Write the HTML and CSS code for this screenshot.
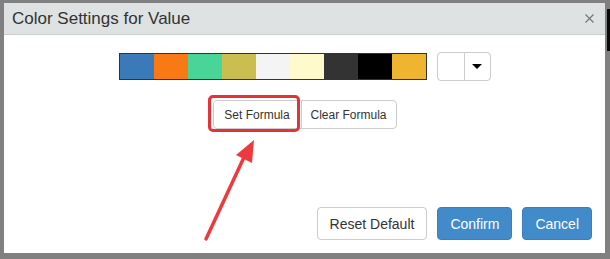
FILE: index.html
```html
<!DOCTYPE html>
<html lang="en">
<head>
  <meta charset="UTF-8">
  <title>Color Settings for Value</title>
  <link rel="stylesheet" href="styles.css">
</head>
<body>

  <!-- dark strip of the page behind the overlay -->
  <div class="backdrop-strip"></div>

  <div class="modal">
    <div class="modal-header">
      <h4 class="modal-title">Color Settings for Value</h4>
      <span class="close">
        <svg width="9" height="9" viewBox="0 0 9 9">
          <path d="M0.5 0.5 L8.5 8.5 M8.5 0.5 L0.5 8.5" stroke="#777" stroke-width="1.2"/>
        </svg>
      </span>
    </div>

    <div class="modal-body">
      <div class="color-row">
        <div class="palette">
          <span class="swatch" style="background:#3a7ab8"></span>
          <span class="swatch" style="background:#f97915"></span>
          <span class="swatch" style="background:#48d597"></span>
          <span class="swatch" style="background:#cbbe50"></span>
          <span class="swatch" style="background:#f4f4f4"></span>
          <span class="swatch" style="background:#fffacc"></span>
          <span class="swatch" style="background:#333333"></span>
          <span class="swatch" style="background:#000000"></span>
          <span class="swatch" style="background:#efb430"></span>
        </div>
        <div class="picker">
          <span class="picker-color"></span>
          <span class="picker-toggle"><span class="caret"></span></span>
        </div>
      </div>

      <div class="btn-group">
        <button class="btn btn-sm highlighted">Set Formula</button>
        <button class="btn btn-sm">Clear Formula</button>
      </div>
    </div>

    <div class="modal-footer">
      <button class="btn">Reset Default</button>
      <button class="btn btn-primary">Confirm</button>
      <button class="btn btn-primary">Cancel</button>
    </div>
  </div>

  <!-- annotation arrow -->
  <svg class="annotation" width="610" height="259" viewBox="0 0 610 259">
    <line x1="206" y1="239" x2="246" y2="153" stroke="#ee3a3f" stroke-width="3.5" stroke-linecap="round"/>
    <polygon points="254,140 236,155 252,163" fill="#ee3a3f"/>
  </svg>

</body>
</html>
```

FILE: styles.css
```css
body {
  margin: 0;
  padding: 3px 5px 6px 4px;
  background: #808080;
  font-family: "Liberation Sans", Arial, sans-serif;
  color: #333;
  position: relative;
  height: 250px;
}

.backdrop-strip {
  position: absolute;
  right: 0;
  top: 9px;
  width: 3px;
  height: 42px;
  background: #0a0a0a;
}

.modal {
  width: 601px;
  height: 250px;
  background: #fff;
  display: flex;
  flex-direction: column;
}

.modal-header {
  height: 31px;
  background: #dee2e3;
  border-bottom: 1px solid #c9cdce;
  display: flex;
  align-items: center;
  justify-content: space-between;
  padding: 0 11px 0 8px;
}

.modal-title {
  margin: 0;
  font-size: 17px;
  font-weight: normal;
  color: #333;
}

.close {
  display: flex;
  margin-top: -1px;
}

.modal-body {
  padding-top: 17px;
  display: flex;
  flex-direction: column;
  align-items: center;
}

.color-row {
  display: flex;
  align-items: center;
  gap: 10px;
}

.palette {
  display: flex;
  border: 1px solid #333;
  height: 25px;
}

.swatch {
  width: 34px;
  height: 25px;
}

.picker {
  display: flex;
  width: 52px;
  height: 27px;
  border: 1px solid #ccc;
  border-radius: 4px;
}

.picker-color {
  width: 26px;
  border-right: 1px solid #ccc;
}

.picker-toggle {
  flex: 1;
  display: flex;
  align-items: center;
  justify-content: center;
}

.caret {
  width: 0;
  height: 0;
  border-top: 5px solid #000;
  border-left: 5px solid transparent;
  border-right: 5px solid transparent;
}

.btn {
  font-family: inherit;
  font-size: 14px;
  color: #333;
  background: #fff;
  border: 1px solid #ccc;
  border-radius: 4px;
  height: 33px;
  padding: 0 12px;
  white-space: nowrap;
  cursor: pointer;
}

.btn-sm {
  font-size: 12px;
  height: 29px;
  padding: 0;
}

.btn-primary {
  background: #428bca;
  border-color: #3a7fbd;
  color: #fff;
}

.btn-group {
  display: flex;
  margin-top: 19px;
}

.btn-group .btn {
  border-radius: 0;
}

.btn-group .btn:first-child {
  border-radius: 4px 0 0 4px;
  width: 89px;
}

.btn-group .btn:last-child {
  border-radius: 0 4px 4px 0;
  margin-left: -1px;
  width: 96px;
}

.highlighted {
  position: relative;
}

.highlighted::after {
  content: "";
  position: absolute;
  left: -6px;
  top: -6px;
  right: 1px;
  bottom: -4px;
  border: 3px solid #e53238;
  border-radius: 5px;
}

.modal-footer {
  margin-top: auto;
  display: flex;
  justify-content: flex-end;
  gap: 10px;
  padding: 0 13px 13px 0;
}

.annotation {
  position: absolute;
  left: 0;
  top: 0;
  pointer-events: none;
}
```
